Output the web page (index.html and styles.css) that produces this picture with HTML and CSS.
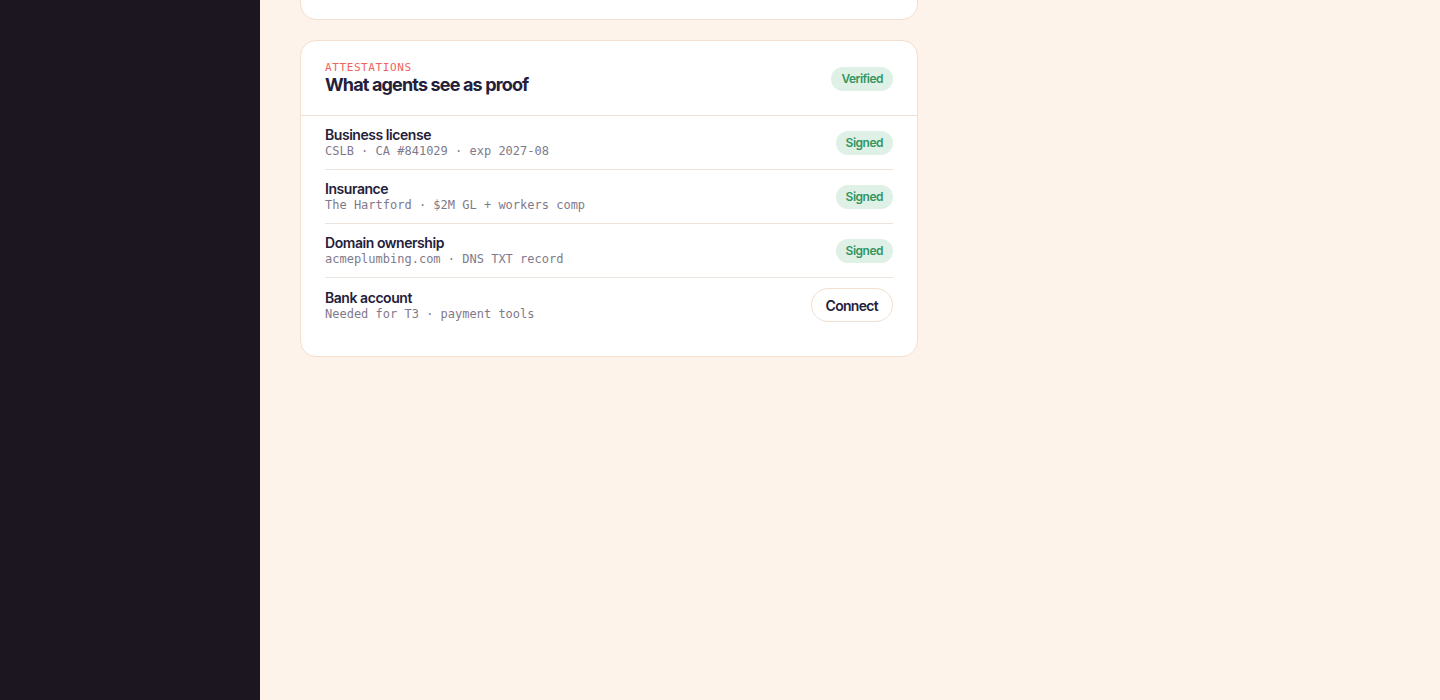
FILE: index.html
```html
<!DOCTYPE html>
<html lang="en" dir="ltr">
  <head>
    <meta charset="utf-8">
    <title>Attestations</title>
    <link rel="stylesheet" href="styles.css">
  </head>
  <body>

    <aside class="sidebar"></aside>

    <main class="content">
      <section class="card card-prev"></section>

      <section class="card">
        <header class="card-head">
          <div>
            <div class="eyebrow">ATTESTATIONS</div>
            <h2>What agents see as proof</h2>
          </div>
          <span class="pill">Verified</span>
        </header>

        <ul class="rows">
          <li class="row">
            <div>
              <b>Business license</b>
              <code>CSLB · CA #841029 · exp 2027-08</code>
            </div>
            <span class="pill">Signed</span>
          </li>
          <li class="row">
            <div>
              <b>Insurance</b>
              <code>The Hartford · $2M GL + workers comp</code>
            </div>
            <span class="pill">Signed</span>
          </li>
          <li class="row">
            <div>
              <b>Domain ownership</b>
              <code>acmeplumbing.com · DNS TXT record</code>
            </div>
            <span class="pill">Signed</span>
          </li>
          <li class="row">
            <div>
              <b>Bank account</b>
              <code>Needed for T3 · payment tools</code>
            </div>
            <button class="btn">Connect</button>
          </li>
        </ul>
      </section>
    </main>

  </body>
</html>
```

FILE: styles.css
```css
* { box-sizing: border-box; }
body {
  margin: 0;
  display: flex;
  min-height: 100vh;
  background-color: #fdf3ea;
  font-family: 'Inter', sans-serif;
  color: #25203a;
  overflow: hidden;
}
.sidebar {
  width: 260px;
  flex-shrink: 0;
  background-color: #1c1620;
}
.content {
  padding: 0 40px;
  width: 698px;
  display: flex;
  flex-direction: column;
  gap: 20px;
}
.card {
  background-color: #fff;
  border: 1px solid #f2dfcf;
  border-radius: 16px;
}
/* tail of the card above, scrolled mostly out of view */
.card-prev {
  height: 60px;
  margin-top: -40px;
}
.card-head {
  display: flex;
  justify-content: space-between;
  align-items: center;
  padding: 20px 24px 19px;
  border-bottom: 1px solid #f2dfcf;
}
.eyebrow {
  font-family: 'DejaVu Sans Mono', monospace;
  font-size: 11px;
  line-height: 13px;
  letter-spacing: 0.6px;
  color: #f0645a;
}
.card-head h2 {
  margin: 0;
  font-size: 18px;
  line-height: 22px;
  font-weight: 700;
  letter-spacing: -0.85px;
}
.pill {
  display: inline-block;
  background-color: #dff1e6;
  color: #33955f;
  font-size: 12px;
  font-weight: 600;
  line-height: 24px;
  padding: 0 10px;
  border-radius: 12px;
  letter-spacing: -0.5px;
}
.rows {
  list-style: none;
  margin: 0;
  padding: 0 24px 24px;
}
.row {
  display: flex;
  justify-content: space-between;
  align-items: center;
  padding: 10px 0;
  border-bottom: 1px solid #ece3dc;
}
.row:last-child {
  border-bottom: none;
}
.row b {
  display: block;
  font-size: 14px;
  line-height: 17px;
  font-weight: 600;
  letter-spacing: -0.45px;
}
.row code {
  display: block;
  font-family: 'DejaVu Sans Mono', monospace;
  font-size: 12px;
  line-height: 16px;
  color: #7f7a8b;
}
.btn {
  font-family: 'Inter', sans-serif;
  font-size: 14px;
  font-weight: 600;
  color: #25203a;
  background: #fff;
  border: 1px solid #f2dfcf;
  border-radius: 17px;
  height: 34px;
  padding: 0 14px;
  letter-spacing: -0.7px;
}
```
